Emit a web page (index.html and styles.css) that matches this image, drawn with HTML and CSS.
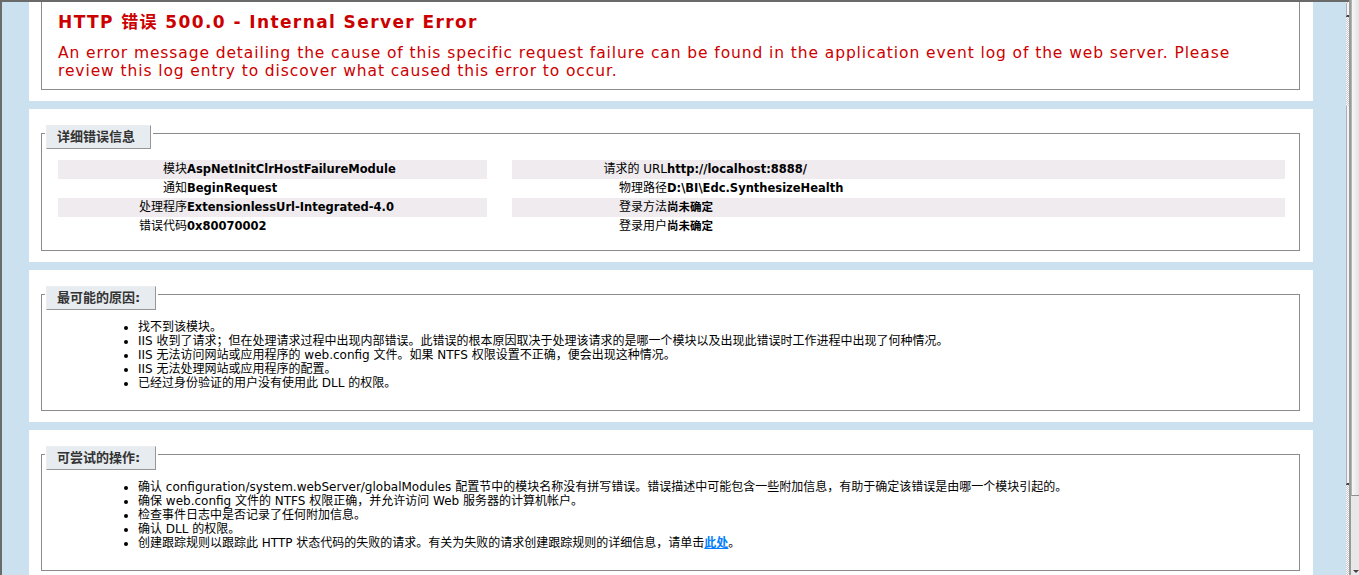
FILE: index.html
```html
<!DOCTYPE html>
<html lang="zh-CN">
<head>
    <meta charset="UTF-8">
    <title>IIS 详细错误 - 500.0 - Internal Server Error</title>
    <link rel="stylesheet" href="styles.css">
</head>
<body>
<div class="window">
    <div class="viewport">
        <div id="content">
            <div class="content-container first">
                <div class="group">
                    <h3>HTTP 错误 500.0 - Internal Server Error</h3>
                    <h4>An error message detailing the cause of this specific request failure can be found in the application event log of the web server. Please review this log entry to discover what caused this error to occur.</h4>
                </div>
            </div>

            <div class="content-container">
                <div class="group">
                    <div class="legend">详细错误信息</div>
                    <div class="details">
                        <table id="details-left">
                            <tr class="alt"><th>模块</th><td>AspNetInitClrHostFailureModule</td></tr>
                            <tr><th>通知</th><td>BeginRequest</td></tr>
                            <tr class="alt"><th>处理程序</th><td>ExtensionlessUrl-Integrated-4.0</td></tr>
                            <tr><th>错误代码</th><td>0x80070002</td></tr>
                        </table>
                        <table id="details-right">
                            <tr class="alt"><th>请求的 URL</th><td>http://localhost:8888/</td></tr>
                            <tr><th>物理路径</th><td>D:\BI\Edc.SynthesizeHealth</td></tr>
                            <tr class="alt"><th>登录方法</th><td>尚未确定</td></tr>
                            <tr><th>登录用户</th><td>尚未确定</td></tr>
                        </table>
                    </div>
                </div>
            </div>

            <div class="content-container">
                <div class="group">
                    <div class="legend">最可能的原因:</div>
                    <ul>
                        <li>找不到该模块。</li>
                        <li>IIS 收到了请求；但在处理请求过程中出现内部错误。此错误的根本原因取决于处理该请求的是哪一个模块以及出现此错误时工作进程中出现了何种情况。</li>
                        <li>IIS 无法访问网站或应用程序的 web.config 文件。如果 NTFS 权限设置不正确，便会出现这种情况。</li>
                        <li>IIS 无法处理网站或应用程序的配置。</li>
                        <li>已经过身份验证的用户没有使用此 DLL 的权限。</li>
                    </ul>
                </div>
            </div>

            <div class="content-container">
                <div class="group">
                    <div class="legend">可尝试的操作:</div>
                    <ul>
                        <li>确认 configuration/system.webServer/globalModules 配置节中的模块名称没有拼写错误。错误描述中可能包含一些附加信息，有助于确定该错误是由哪一个模块引起的。</li>
                        <li>确保 web.config 文件的 NTFS 权限正确，并允许访问 Web 服务器的计算机帐户。</li>
                        <li>检查事件日志中是否记录了任何附加信息。</li>
                        <li>确认 DLL 的权限。</li>
                        <li>创建跟踪规则以跟踪此 HTTP 状态代码的失败的请求。有关为失败的请求创建跟踪规则的详细信息，请单击<a href="#">此处</a>。</li>
                    </ul>
                </div>
            </div>
        </div>
    </div>

    <div class="scrollbar">
        <div class="splitter">
            <div class="nub nub-top"></div>
            <div class="nub nub-main"></div>
        </div>
        <div class="edge"></div>
        <div class="track">
            <div class="thumb"></div>
            <div class="arrow"></div>
        </div>
    </div>
</div>
</body>
</html>
```

FILE: styles.css
```css
* { box-sizing: border-box; }
html, body { margin: 0; height: 100%; overflow: hidden; }
body { font-family: "DejaVu Sans", "Noto Sans CJK SC", sans-serif; font-size: 12px; color: #000; background: #cbe1ef; }

.window { display: flex; height: 575px; }
.viewport { flex: 1; border-top: 2px solid #6a6a6a; border-left: 2px solid #6a6a6a; background: #cbe1ef; overflow: hidden; }

#content { margin: -25px 0 0 27px; width: 1284px; }
.content-container { background: #fff; padding: 24px 13px 11px 12px; margin-bottom: 8px; }
.group { border: 1px solid #8c8c8c; padding: 0 14px 10px 16px; }
.first .group { padding-bottom: 9px; }

h3 { margin: 11px 0 0 0; font-size: 17px; line-height: 19px; font-weight: bold; letter-spacing: 1.4px; color: #cc0000; }
h4 { margin: 12px 0 0 0; font-size: 15.5px; line-height: 18px; font-weight: normal; letter-spacing: 0.9px; color: #cc0000; }

.legend { display: table; margin: -9px 0 0 -12px; padding: 4px 15px 4px 10px; line-height: 14px; font-size: 13px; font-weight: bold; color: #333; background: #e7ecf0; border-top: 1px solid #ededed; border-left: 1px solid #ededed; border-right: 1px solid #969696; border-bottom: 1px solid #969696; box-shadow: -1px 0 0 #fff, 2px 0 0 #fff; }

.details { display: flex; gap: 25px; margin: 11px 0 4px 0; }
.details table { border-collapse: collapse; border-spacing: 0; }
#details-left { width: 429px; }
#details-right { width: 773px; }
.details th, .details td { padding: 3px 0; line-height: 13px; vertical-align: top; text-align: left; }
.details th { font-weight: normal; text-align: right; font-size: 12px; }
#details-left th { width: 129px; }
#details-right th { width: 155px; }
.details td { font-weight: bold; font-size: 11.5px; }
.details tr.alt th, .details tr.alt td { background: #efebef; }

ul { margin: 10px 0 10px 40px; padding-left: 40px; }
li { line-height: 14px; }

a:link, a:visited { color: #007eff; font-weight: bold; }

.scrollbar { width: 13px; display: flex; }
.splitter { width: 3px; display: flex; flex-direction: column; border-top: 2px solid #6a6a6a; background: repeating-conic-gradient(#c8c8c8 0 25%, #fff 0 50%) 0 0 / 2px 2px; }
.nub { background: #f4f4f4; border-left: 1px solid #b0b0b0; border-bottom: 2px solid #404040; }
.nub-top { margin-top: 1px; height: 14px; }
.nub-main { margin-top: 89px; height: 379px; }
.edge { width: 2px; background: #9a9a9a; }
.track { flex: 1; background: #e8e8e8; display: flex; flex-direction: column; }
.thumb { height: 496px; background: linear-gradient(to right, #f7f7f7, #e2e2e2); border-left: 1px solid #b4b4b4; border-bottom: 1px solid #8f8f8f; }
.arrow { margin: auto 0 2px 2px; width: 0; height: 0; border-left: 3px solid transparent; border-right: 3px solid transparent; border-top: 3px solid #444; }
```
